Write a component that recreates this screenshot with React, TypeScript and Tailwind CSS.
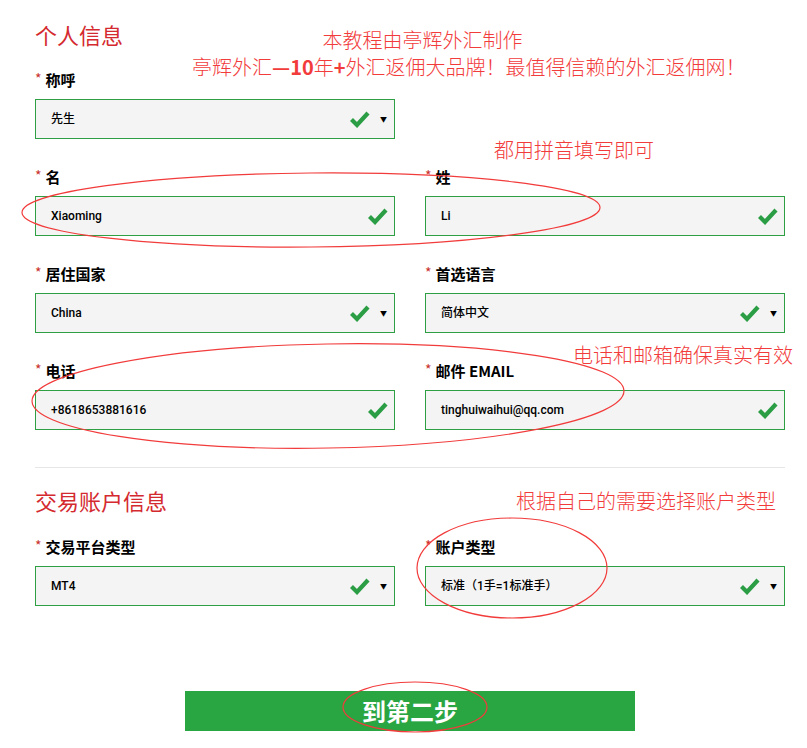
import React from "react";

const CJK = "font-['Noto_Sans_CJK_SC',sans-serif]";

function Check() {
  return (
    <svg width="21" height="18" viewBox="0 0 21 18" aria-hidden="true">
      <path d="M2.5 9.5 L8 15 L19 3" fill="none" stroke="#2b9e45" strokeWidth="4.2" strokeLinejoin="miter" />
    </svg>
  );
}

function Field({ label, value, select = false }: { label: string; value: string; select?: boolean }) {
  return (
    <div className="flex flex-col">
      <div className="flex items-center h-[20px] text-[15px] font-bold text-black leading-none">
        <span className="text-[#c9302c] font-normal text-[14px] mr-[4px] -mt-[3px]">*</span>
        <span>{label}</span>
      </div>
      <div className="mt-[10px] h-[40px] border border-[#2ea043] bg-[#f4f4f4] flex items-center pl-[15px] pr-[6px]">
        <span className="flex-1 text-[12px] font-medium text-black font-['Roboto','Noto_Sans_CJK_SC',sans-serif]">{value}</span>
        <Check />
        {select ? <span className="ml-[10px] mr-[1px] text-[7px] text-black leading-none">▼</span> : <span className="w-[0px]" />}
      </div>
    </div>
  );
}

function Ellipse({ cx, cy, rx, ry, rot = 0 }: { cx: number; cy: number; rx: number; ry: number; rot?: number }) {
  return (
    <ellipse cx={cx} cy={cy} rx={rx} ry={ry} fill="none" stroke="#f23b3b" strokeWidth="1.2" transform={`rotate(${rot} ${cx} ${cy})`} />
  );
}

export default function App() {
  return (
    <div className={`relative w-[807px] h-[748px] bg-white overflow-hidden ${CJK}`}>
      <div className="pl-[35px] w-[785px] pt-[18px]">
        <h2 className="text-[22px] leading-[32px] text-[#d42a2f] font-normal">个人信息</h2>

        <div className="mt-[19px] grid grid-cols-2 gap-x-[30px] gap-y-[27px]">
          <Field label="称呼" value="先生" select />
          <div />
          <Field label="名" value="Xiaoming" />
          <Field label="姓" value="Li" />
          <Field label="居住国家" value="China" select />
          <Field label="首选语言" value="简体中文" select />
          <Field label="电话" value="+8618653881616" />
          <Field label="邮件 EMAIL" value="tinghuiwaihui@qq.com" />
        </div>

        <div className="mt-[37px] border-t border-[#e6e6e6]" />

        <h2 className="mt-[16px] text-[22px] leading-[32px] text-[#d42a2f] font-normal">交易账户信息</h2>

        <div className="mt-[20px] grid grid-cols-2 gap-x-[30px]">
          <Field label="交易平台类型" value="MT4" select />
          <Field label="账户类型" value="标准（1手=1标准手）" select />
        </div>

        <div className="mt-[85px] flex">
          <button type="button" className="ml-[150px] w-[450px] h-[40px] bg-[#29a542] text-white text-[24px] font-bold leading-none">
            到第二步
          </button>
        </div>
      </div>

      {/* tutorial annotations */}
      <div className="absolute inset-0 pointer-events-none text-[#f23b3b] text-[20px] font-light leading-none">
        <div className="absolute left-0 w-[845px] top-[30px] text-center">本教程由亭辉外汇制作</div>
        <div className="absolute left-[192px] top-[57px] whitespace-nowrap">
          亭辉外汇<b className="font-bold">—10</b>年<b className="font-bold">+</b>外汇返佣大品牌！最值得信赖的外汇返佣网！
        </div>
        <div className="absolute left-[494px] top-[140px]">都用拼音填写即可</div>
        <div className="absolute left-[573px] top-[345px]">电话和邮箱确保真实有效</div>
        <div className="absolute left-[516px] top-[491px]">根据自己的需要选择账户类型</div>
        <svg className="absolute inset-0" width="807" height="748">
          <Ellipse cx={311} cy={210} rx={289} ry={37} rot={-0.5} />
          <Ellipse cx={328} cy={396} rx={296} ry={52} rot={-1} />
          <Ellipse cx={512} cy={568} rx={95} ry={50} />
          <Ellipse cx={415} cy={707} rx={72} ry={25} />
        </svg>
      </div>
    </div>
  );
}
